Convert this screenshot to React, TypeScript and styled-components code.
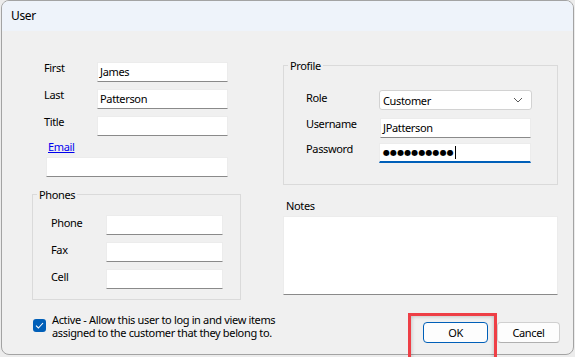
import React from 'react';
import styled, { createGlobalStyle } from 'styled-components';

const GlobalStyle = createGlobalStyle`
  html, body {
    margin: 0;
    padding: 0;
    background: #e8e8e8;
  }
  body {
    font-family: "Noto Sans", "Liberation Sans", sans-serif;
    font-size: 11px;
    letter-spacing: -0.35px;
    color: #000;
  }
  * {
    box-sizing: border-box;
  }
`;

export default function App() {
    return (
        <>
            <GlobalStyle/>
            <Screen>
                <Window>
                    <TitleBar>User</TitleBar>
                    <Body>
                        <LeftColumn>
                            <NameRow $top={0}>
                                <Label>First</Label>
                                <Field>James</Field>
                            </NameRow>
                            <NameRow $top={7}>
                                <Label>Last</Label>
                                <Field>Patterson</Field>
                            </NameRow>
                            <NameRow $top={7}>
                                <Label>Title</Label>
                                <Field/>
                            </NameRow>
                            <EmailLink href="#">Email</EmailLink>
                            <EmailField/>

                            <GroupBox $top={10}>
                                <Legend>Phones</Legend>
                                <PhoneList>
                                    <PhoneRow>
                                        <Label>Phone</Label>
                                        <Field/>
                                    </PhoneRow>
                                    <PhoneRow>
                                        <Label>Fax</Label>
                                        <Field/>
                                    </PhoneRow>
                                    <PhoneRow>
                                        <Label>Cell</Label>
                                        <Field/>
                                    </PhoneRow>
                                </PhoneList>
                            </GroupBox>

                            <CheckRow>
                                <CheckBox>
                                    <svg width="9" height="7" viewBox="0 0 9 7">
                                        <path d="M1 3.6 L3.4 6 L8 1" fill="none" stroke="#fff" strokeWidth="1.1"/>
                                    </svg>
                                </CheckBox>
                                <CheckText>
                                    Active - Allow this user to log in and view items assigned to the customer that they belong to.
                                </CheckText>
                            </CheckRow>
                        </LeftColumn>

                        <RightColumn>
                            <GroupBox $top={0}>
                                <Legend>Profile</Legend>
                                <ProfileList>
                                    <ProfileRow $top={0}>
                                        <Label $lift={1}>Role</Label>
                                        <Select>
                                            <span>Customer</span>
                                            <svg width="10" height="6" viewBox="0 0 10 6">
                                                <path d="M1 1 L5 5 L9 1" fill="none" stroke="#5a5a5a" strokeWidth="1"/>
                                            </svg>
                                        </Select>
                                    </ProfileRow>
                                    <ProfileRow $top={8}>
                                        <Label>Username</Label>
                                        <ProfileField>JPatterson</ProfileField>
                                    </ProfileRow>
                                    <ProfileRow $top={5}>
                                        <Label>Password</Label>
                                        <ProfileField $focused>
                                            <Dots>●●●●●●●●●●</Dots>
                                            <Caret/>
                                        </ProfileField>
                                    </ProfileRow>
                                </ProfileList>
                            </GroupBox>

                            <NotesLabel>Notes</NotesLabel>
                            <Notes/>

                            <ButtonRow>
                                <Button $primary>OK</Button>
                                <Button>Cancel</Button>
                            </ButtonRow>
                        </RightColumn>
                    </Body>
                </Window>
                <Highlight/>
            </Screen>
        </>
    );
}

const Screen = styled.div`
  position: relative;
  width: 575px;
  height: 357px;
  overflow: hidden;
  background: #ececec;
`

const Window = styled.div`
  margin-left: 1px;
  width: 573px;
  height: 355px;
  border: 1px solid #a3a3a3;
  border-radius: 8px;
  overflow: hidden;
  display: flex;
  flex-direction: column;
  background: #f0f0f0;
`

const TitleBar = styled.div`
  height: 30px;
  line-height: 30px;
  padding-left: 9px;
  background: #eef3fa;
  font-size: 12px;
`

const Body = styled.div`
  flex: 1;
  display: flex;
  gap: 42px;
  padding-left: 30px;
`

const LeftColumn = styled.div`
  width: 209px;
  display: flex;
  flex-direction: column;
  padding-top: 31px;
`

const RightColumn = styled.div`
  width: 275px;
  display: flex;
  flex-direction: column;
  padding-top: 27px;
`

const NameRow = styled.div<{ $top: number }>`
  display: grid;
  grid-template-columns: 65px 131px;
  align-items: start;
  margin-top: ${p => p.$top}px;
`

const Label = styled.div<{ $lift?: number }>`
  padding-left: 12px;
  line-height: 14px;
  margin-top: ${p => (p.$lift ?? -1)}px;
  white-space: nowrap;
`

const Field = styled.div`
  height: 20px;
  line-height: 18px;
  padding-left: 2px;
  background: #fff;
  border: 1px solid #ececec;
  border-bottom-color: #8a8a8a;
  white-space: nowrap;
`

const EmailLink = styled.a`
  margin: 4px 0 0 16px;
  line-height: 14px;
  color: #0000ee;
  text-decoration: underline;
  align-self: flex-start;
`

const EmailField = styled(Field)`
  margin: 3px 0 0 14px;
  width: 182px;
`

const GroupBox = styled.fieldset<{ $top: number }>`
  margin: ${p => p.$top}px 0 0;
  padding: 0;
  border: 1px solid #dadada;
  min-width: 0;
`

const Legend = styled.legend`
  margin-left: 4px;
  padding: 0 2px;
  line-height: 15px;
`

const PhoneList = styled.div`
  display: flex;
  flex-direction: column;
  gap: 7px;
  padding: 13px 0 10px 6px;
`

const PhoneRow = styled.div`
  display: grid;
  grid-template-columns: 67px 117px;
  align-items: start;

  & > ${Label} {
    margin-top: 1px;
  }
`

const ProfileList = styled.div`
  display: flex;
  flex-direction: column;
  padding: 17px 0 21px 10px;
`

const ProfileRow = styled.div<{ $top: number }>`
  display: grid;
  grid-template-columns: 85px 153px;
  align-items: start;
  margin-top: ${p => p.$top}px;
`

const Select = styled.div`
  height: 20px;
  display: flex;
  align-items: center;
  justify-content: space-between;
  padding: 0 8px 0 3px;
  background: #fff;
  border: 1px solid #d2d2d2;
  border-radius: 3px;
`

const ProfileField = styled(Field)<{ $focused?: boolean }>`
  margin-left: 1px;
  width: 151px;
  display: flex;
  align-items: center;
  ${p => p.$focused && `
    border-bottom: 2px solid #005fb8;
    margin-left: 0;
    width: 152px;
    padding-left: 3px;
  `}
`

const Dots = styled.span`
  font-family: "DejaVu Sans", sans-serif;
  font-size: 8px;
  letter-spacing: 0.1px;
`

const Caret = styled.span`
  width: 1px;
  height: 13px;
  background: #000;
  margin-left: 1px;
`

const CheckRow = styled.div`
  display: flex;
  align-items: flex-start;
  gap: 6px;
  margin: 13px 0 0 1px;
  width: 250px;
`

const CheckBox = styled.div`
  flex: none;
  width: 13px;
  height: 13px;
  margin-top: 6px;
  border-radius: 3px;
  background: #005fb8;
  display: flex;
  align-items: center;
  justify-content: center;
`

const CheckText = styled.div`
  line-height: 13px;
`

const NotesLabel = styled.div`
  margin: 14px 0 0 3px;
  line-height: 14px;
`

const Notes = styled.div`
  margin-top: 3px;
  height: 79px;
  background: #fff;
  border: 1px solid #ececec;
  border-bottom-color: #8a8a8a;
`

const ButtonRow = styled.div`
  display: flex;
  justify-content: flex-end;
  gap: 9px;
  margin: 27px -2px 0 0;
`

const Button = styled.div<{ $primary?: boolean }>`
  width: ${p => (p.$primary ? 65 : 63)}px;
  height: 21px;
  line-height: 19px;
  text-align: center;
  background: #fdfdfd;
  border: 1px solid ${p => (p.$primary ? '#005fb8' : '#d0d0d0')};
  border-bottom-color: ${p => (p.$primary ? '#005fb8' : '#b0b0b0')};
  border-radius: 4px;
`

const Highlight = styled.div`
  position: absolute;
  left: 408px;
  top: 313px;
  width: 89px;
  height: 50px;
  border: 3px solid #ee3f46;
  box-shadow: inset 0 0 4px rgba(0, 0, 0, 0.25);
  pointer-events: none;
`
